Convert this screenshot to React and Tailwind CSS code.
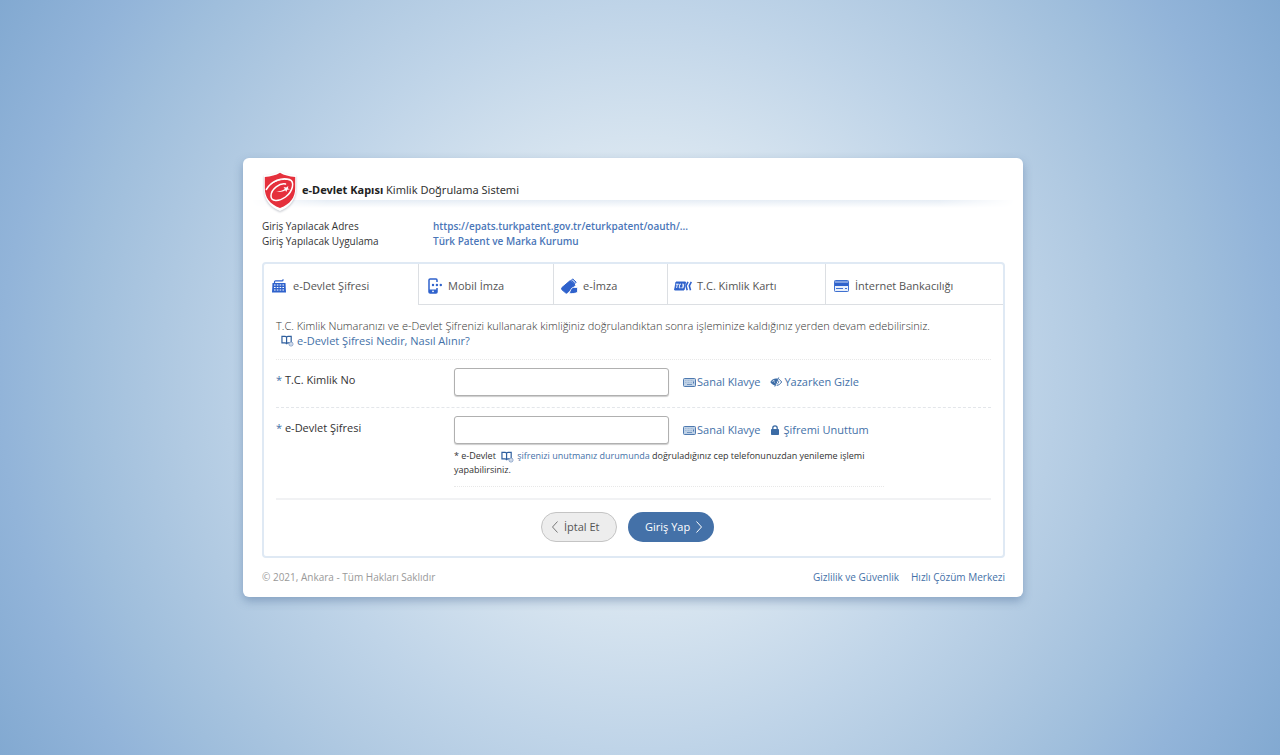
import { useState } from 'react'

const BookHelp = ({ className = '' }) => (
  <svg viewBox="0 0 14 13" className={`inline-block h-[12px] w-[13px] shrink-0 ${className}`} fill="none" aria-hidden="true">
    <path d="M1 1.500h3.500C5.300 1.500 6 2 6 2.700 6 2 6.700 1.500 7.500 1.500H11v7H7.500C6.700 8.500 6 9 6 10c0-1-.7-1.500-1.500-1.500H1zM6 2.700V9.500" stroke="#2f5f9e" strokeWidth="1.300" />
    <circle cx="10.800" cy="9.800" r="2.200" fill="#fff" stroke="#6f8fbd" strokeWidth=".9" />
    <path d="M10.800 8.900v1.900" stroke="#6f8fbd" strokeWidth=".8" />
  </svg>
)

const VirtualKeyboard = () => (
  <svg viewBox="0 0 13 9" className="h-[9px] w-[13px] shrink-0" fill="none" aria-hidden="true">
    <rect x=".5" y=".5" width="12" height="8" rx="1" fill="#c0d2e6" stroke="#4f7ab0" />
    <path d="M2 2.500h9M2 4.500h7" stroke="#a3bbd8" strokeDasharray="1 .5" />
    <path d="M4 6.500h5" stroke="#6f93c0" />
    <path d="M10.500 3.500v2" stroke="#4f7ab0" />
  </svg>
)

const EyeSlash = () => (
  <svg viewBox="0 0 12 10" className="h-[10px] w-[12px] shrink-0" fill="none" aria-hidden="true">
    <path d="M.3 5C1.800 2.500 3.800 1.500 6 1.500c.7 0 1.300.1 1.900.3L5 8.400C3 8 1.400 6.800.3 5z" fill="#3b6ba5" />
    <path d="M2.200 4.800c.4-.9 1-1.500 1.900-1.800-.4 1 0 2.200.8 2.800" stroke="#fff" strokeWidth=".6" />
    <path d="M8.700.5L4.800 9.500" stroke="#3b6ba5" strokeWidth="1" />
    <path d="M9.200 2.400C10.200 3 11 3.900 11.600 5 10.500 6.900 8.800 8.200 6.700 8.400M8.600 3.800c.3 1.200-.1 2.300-1.200 3" stroke="#3b6ba5" strokeWidth="1" />
  </svg>
)

const Lock = () => (
  <svg viewBox="0 0 8 10" className="h-[10px] w-[8px] shrink-0" fill="none" aria-hidden="true">
    <rect y="4" width="8" height="6" rx=".8" fill="#3b6ba5" />
    <path d="M1.800 4.500V3a2.200 2.200 0 0 1 4.400 0v1.500" stroke="#3b6ba5" strokeWidth="1.300" />
  </svg>
)

const Keyboard = () => (
  <svg viewBox="0 0 14 14" className="h-[14px] w-[14px]" fill="none" aria-hidden="true">
    <path d="M2.500 4.500V2.800c0-.6.400-.9 1-.9h6.500c.7 0 1-.3 1-.9V.3" stroke="#2f62cc" strokeWidth="1.200" />
    <path d="M.5 4h13l.5 9.500H0z" fill="#2f62cc" />
    <path d="M2 6h10M2 8.500h10M2 11h10" stroke="#fff" strokeWidth="1.200" strokeDasharray="1.600 1.200" />
  </svg>
)

const MobileSign = () => (
  <svg viewBox="0 0 15 16" className="h-[16px] w-[15px]" fill="none" aria-hidden="true">
    <path d="M9 4V2.200C9 1.400 8.600 1 8 1H2.200C1.500 1 1 1.400 1 2v12c0 .6.500 1 1.200 1H8c.6 0 1-.4 1-1v-4" stroke="#2f62cc" strokeWidth="1.500" />
    <path d="M1 11.500h8V15H1z" fill="#2f62cc" />
    <circle cx="5" cy="13.300" r=".9" fill="#fff" />
    <circle cx="5" cy="7" r="1.200" fill="#2f62cc" />
    <circle cx="8.900" cy="7" r="1.200" fill="#2f62cc" />
    <circle cx="12.800" cy="7" r="1.200" fill="#2f62cc" />
  </svg>
)

const UsbSign = () => (
  <svg viewBox="0 0 17 16" className="h-[16px] w-[17px]" fill="none" aria-hidden="true">
    <path d="M9.200 2.600l4.900 4.500-7.500 7.500c-.7.700-1.600.7-2.300 0L1 11.800c-.7-.7-.7-1.600 0-2.300z" fill="#2f62cc" stroke="#2f62cc" strokeLinejoin="round" />
    <path d="M10.300 2.300L11.700.9l3.500 3.300-1.400 1.500z" fill="#a9c1ee" stroke="#2f62cc" strokeWidth="1" />
    <path d="M8.300 15.200c1.200-2.800 2-5.800 4-5.800l4.200.1v4.600c-1.600 1.500-5.500 1.800-8.200 1.100z" fill="#2f62cc" stroke="#fff" strokeWidth=".8" />
  </svg>
)

const IdCard = () => (
  <svg viewBox="0 0 18 10" className="h-[10px] w-[18px]" fill="none" aria-hidden="true">
    <path d="M2 1h9.500L10 9H.6z" fill="#2f62cc" stroke="#2f62cc" strokeLinejoin="round" />
    <path d="M1.800 3.200h3M3.300 3.200L2.600 7M7 3.200H5.800L5.200 6.800h1.300M8 3.200h1.700L9.100 6.800H7.400M8 5h1.400" stroke="#fff" strokeWidth=".9" />
    <path d="M14 .8L12 4.800l1.200 4.400M17.300.8l-2 4 1.200 4.400" stroke="#2f62cc" strokeWidth="1.600" />
  </svg>
)

const BankCard = () => (
  <svg viewBox="0 0 15 12" className="h-[12px] w-[15px]" fill="none" aria-hidden="true">
    <rect x=".5" y=".5" width="14" height="11" rx=".8" fill="#e8effb" stroke="#3f70d0" />
    <path d="M1 1h13v2H1z" fill="#7f9fe0" />
    <path d="M1 3h13v3H1z" fill="#2f62cc" />
    <path d="M2 8.500h7M11 8.500h2" stroke="#3f70d0" />
  </svg>
)

const Shield = () => (
  <svg viewBox="0 0 36 42" className="relative h-[42px] w-[36px] shrink-0 drop-shadow-[0_1px_1px_rgba(80,90,110,0.35)]" fill="none" aria-hidden="true">
    <path d="M18 1c4 2.700 9 4 16 4.300V19c0 9.500-5.500 18-16 22C7.500 37 2 28.500 2 19V5.300C9 5 14 3.700 18 1z" fill="#fff" />
    <path d="M18 2.800C22 5.300 27 6.500 33.200 7v11c0 9.500-4.700 16-15.200 20C7.500 34 2.800 27.500 2.800 18V7C9 6.500 14 5.300 18 2.800z" fill="#e5303c" />
    <path d="M4.300 19.500C9.500 10.500 20 7 27.500 9.500c5.500 2.200 3.500 12-4 17.500-7 5-14.500 4.500-14.500-1C9 18.500 18 13 23.500 14" stroke="#fff" strokeWidth="1.500" strokeLinecap="round" />
    <path d="M5.500 17.500C11 10.500 21 8 27.500 10" stroke="#fff" strokeWidth="1" strokeLinecap="round" />
    <path d="M14 21.500c3.500.3 6.500-.9 8.800-2.500l-1.200-2 2.700.6 2-1.700-.4 2.500 2 .9-2.700.5-1 2.300-.9-1.800c-2.500 1.500-5.800 2-9.300 1.200z" fill="#fff" />
  </svg>
)

const tabs = [
  { id: 'sifre', label: 'e-Devlet Şifresi', Icon: Keyboard, box: 'w-[154px] pl-[8px] gap-[7px]' },
  { id: 'mobil', label: 'Mobil İmza', Icon: MobileSign, box: 'w-[135px] pl-[9px] gap-[5px]' },
  { id: 'imza', label: 'e-İmza', Icon: UsbSign, box: 'w-[114px] pl-[7px] gap-[5px]' },
  { id: 'kimlik', label: 'T.C. Kimlik Kartı', Icon: IdCard, box: 'w-[158px] pl-[6px] gap-[5px]' },
  { id: 'banka', label: 'İnternet Bankacılığı', Icon: BankCard, box: 'flex-1 pl-[8px] gap-[6px]' },
]

function Field({ id, label, type, children, note }) {
  return (
    <div className="flex items-start text-[11px]">
      <label htmlFor={id} className="w-[178px] shrink-0 pt-[3px] leading-[18px] text-[#333]">
        <span className="text-[#4471a8]">*</span> {label}
      </label>
      <div className="min-w-0 flex-1">
        <div className="flex items-center">
          <input
            id={id}
            type={type}
            className="h-[28px] w-[215px] rounded-[3px] border border-[#b0b0b0] bg-white px-2 shadow-[0_1px_1px_rgba(0,0,0,0.2)] outline-none"
          />
          <div className="flex items-center pl-[14px] leading-[18px] text-[#4471a8]">{children}</div>
        </div>
        {note}
      </div>
    </div>
  )
}

export default function App() {
  const [active, setActive] = useState('sifre')

  return (
    <div className="flex min-h-screen items-center justify-center bg-[radial-gradient(circle_at_center,#f2f7fb_0%,#d8e5f0_30%,#bfd4e8_50%,#b1cae2_62%,#9fbedc_76%,#92b4d9_86%,#82a9d1_100%)] pr-[14px] font-['Open_Sans',sans-serif] text-[#555]">
      <main className="w-full max-w-[780px] rounded-[6px] bg-white pb-[12px] shadow-[0_4px_10px_rgba(60,95,140,0.4)]">
        <header className="relative z-10 flex h-[42px] items-start pl-[19px] pt-[12px]">
          <Shield />
          <h1 className="pl-[4px] pt-[11px] font-['Noto_Sans',sans-serif] text-[11px] leading-[18px] text-[#333]">
            <strong className="font-bold text-[#222]">e-Devlet Kapısı</strong> Kimlik Doğrulama Sistemi
          </h1>
        </header>
        <div className="mx-[8px] h-[8px] bg-linear-to-b from-[#e6edf5] to-white [mask-image:linear-gradient(to_right,transparent,black_10%,black_90%,transparent)]" />

        <dl className="grid grid-cols-[171px_1fr] px-[19px] pt-[11px] text-[10px] leading-[15px]">
          <dt className="text-[#333]">Giriş Yapılacak Adres</dt>
          <dd className="font-semibold text-[#4a76b8]">https://epats.turkpatent.gov.tr/eturkpatent/oauth/...</dd>
          <dt className="text-[#333]">Giriş Yapılacak Uygulama</dt>
          <dd className="font-semibold text-[#4a76b8]">Türk Patent ve Marka Kurumu</dd>
        </dl>

        <section className="ml-[19px] mr-[18px] mt-[13px] rounded-[4px] border-2 border-[#dfe9f4]">
          <div role="tablist" className="flex h-[41px]">
            {tabs.map(({ id, label, Icon, box }) => (
              <button
                key={id}
                type="button"
                role="tab"
                aria-selected={active === id}
                onClick={() => setActive(id)}
                className={`flex items-center border-b pt-[4px] text-left text-[11px] text-[#555] ${box} ${active === id ? 'border-b-transparent' : 'border-l border-[#dcdfe3]'}`}
              >
                <Icon />
                {label}
              </button>
            ))}
          </div>

          <form className="px-[12px] pb-[14px]" onSubmit={(e) => e.preventDefault()}>
            <p className="border-b border-dotted border-[#e8e8e8] pb-[11px] pt-[13px] text-[11px] font-light leading-[15px] text-[#333]">
              T.C. Kimlik Numaranızı ve e-Devlet Şifrenizi kullanarak kimliğiniz doğrulandıktan sonra işleminize kaldığınız yerden devam edebilirsiniz.
              <a href="#nedir" className="flex items-center gap-[3px] pl-[5px] font-normal text-[#4471a8]">
                <BookHelp />
                e-Devlet Şifresi Nedir, Nasıl Alınır?
              </a>
            </p>

            <div className="border-b border-dashed border-[#e3e6ea] pb-[11px] pt-[8px]">
              <Field id="tckn" type="text" label="T.C. Kimlik No">
                <a href="#klavye" className="flex items-center gap-[1px]"><VirtualKeyboard />Sanal Klavye</a>
                <a href="#gizle" className="ml-[10px] flex items-center gap-[2px]"><EyeSlash />Yazarken Gizle</a>
              </Field>
            </div>

            <div className="border-b-2 border-[#f1f2f4] pb-[11px] pt-[8px]">
              <Field
                id="parola"
                type="password"
                label="e-Devlet Şifresi"
                note={
                  <p className="w-[430px] border-b border-dotted border-[#e8e8e8] pb-[9px] pt-[5px] text-[9px] leading-[14px] text-[#333]">
                    * e-Devlet{' '}
                    <a href="#unuttum" className="text-[#4471a8]">
                      <BookHelp className="mx-[3px]" />
                      şifrenizi unutmanız durumunda
                    </a>{' '}
                    doğruladığınız cep telefonunuzdan yenileme işlemi yapabilirsiniz.
                  </p>
                }
              >
                <a href="#klavye" className="flex items-center gap-[1px]"><VirtualKeyboard />Sanal Klavye</a>
                <a href="#unuttum" className="ml-[11px] flex items-center gap-[4px]"><Lock />Şifremi Unuttum</a>
              </Field>
            </div>

            <div className="flex justify-center gap-[11px] pr-[12px] pt-[12px] text-[11px]">
              <button type="button" className="flex h-[30px] w-[76px] items-center gap-[6px] rounded-full border border-[#c4c4c4] bg-[#ededed] pl-[10px] text-[#555]">
                <svg viewBox="0 0 6 12" className="h-[12px] w-[6px]" fill="none" stroke="#777" aria-hidden="true"><path d="M5.500.5l-5 5.500 5 5.500" /></svg>
                İptal Et
              </button>
              <button type="submit" className="flex h-[30px] w-[86px] items-center gap-[6px] rounded-full bg-[#4471a8] pl-[17px] font-medium text-white">
                Giriş Yap
                <svg viewBox="0 0 6 12" className="h-[12px] w-[6px]" fill="none" stroke="#fff" aria-hidden="true"><path d="M.5.5l5 5.500-5 5.500" /></svg>
              </button>
            </div>
          </form>
        </section>

        <footer className="flex justify-between pl-[19px] pr-[18px] pt-[12px] text-[10px] leading-[15px] text-[#999]">
          <span>© 2021, Ankara - Tüm Hakları Saklıdır</span>
          <nav className="flex gap-[12px] text-[#4471a8]">
            <a href="#gizlilik">Gizlilik ve Güvenlik</a>
            <a href="#cozum">Hızlı Çözüm Merkezi</a>
          </nav>
        </footer>
      </main>
    </div>
  )
}
